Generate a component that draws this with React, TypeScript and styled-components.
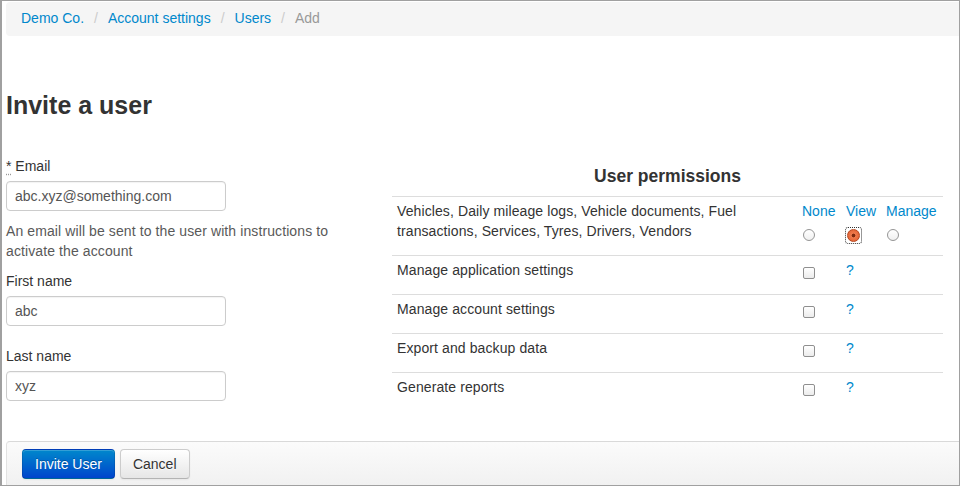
import React from "react";
import styled, { createGlobalStyle } from "styled-components";

const GlobalStyle = createGlobalStyle`
	html, body {
		margin: 0;
		padding: 0;
		background: #fff;
	}
	body {
		font-family: "Liberation Sans", Arial, Helvetica, sans-serif;
		font-size: 14px;
		line-height: 20px;
		color: #333;
	}
	* {
		box-sizing: border-box;
	}
`;

const Frame = styled.div`
	width: 960px;
	height: 486px;
	border: 1px solid #a0a0a0;
	border-left-width: 2px;
	padding-left: 4px;
	display: flex;
	flex-direction: column;
	overflow: hidden;
`;

const Breadcrumb = styled.ul`
	list-style: none;
	margin: 1px 0 0;
	padding: 6px 15px 8px;
	height: 34px;
	background: #f5f5f5;
	border-radius: 4px 0 0 4px;
	display: flex;
`;

const Crumb = styled.li<{ $active?: boolean }>`
	color: ${(p) => (p.$active ? "#999" : "#0088cc")};
`;

const Divider = styled.span`
	color: #ccc;
	padding: 0 10px;
`;

const Title = styled.h3`
	margin: 49px 0 31px 0;
	font-size: 25px;
	line-height: 40px;
	font-weight: bold;
	color: #333;
`;

const Columns = styled.div`
	display: grid;
	grid-template-columns: 386px 551px;
`;

const Field = styled.div<{ $gap: number }>`
	margin-bottom: ${(p) => p.$gap}px;
`;

const Label = styled.label`
	display: block;
	margin-bottom: 5px;
	color: #333;
`;

const Required = styled.abbr`
	text-decoration: underline dotted #999;
	text-underline-offset: 3px;
`;

const TextInput = styled.input`
	display: block;
	width: 220px;
	height: 30px;
	padding: 4px 8px;
	border: 1px solid #ccc;
	border-radius: 4px;
	font-family: inherit;
	font-size: 14px;
	color: #555;
	box-shadow: inset 0 1px 1px rgba(0, 0, 0, 0.05);
	outline: none;
`;

const Help = styled.p`
	margin: 10px 0 0;
	width: 340px;
	color: #595959;
	letter-spacing: 0.1px;
`;

const Permissions = styled.section`
	padding-top: 10px;
`;

const PermTitle = styled.h4`
	margin: 0 0 10px;
	font-size: 17.5px;
	line-height: 20px;
	font-weight: bold;
	text-align: center;
	color: #333;
`;

const PermRow = styled.div<{ $tall?: boolean }>`
	display: grid;
	grid-template-columns: 405px 44px 40px 62px;
	border-top: 1px solid #ddd;
	min-height: ${(p) => (p.$tall ? 59 : 39)}px;
`;

const Cell = styled.div`
	padding: 4px 5px 0;
	letter-spacing: 0.1px;
`;

const OptionHead = styled.span`
	display: block;
	color: #0088cc;
	letter-spacing: 0;
`;

const Radio = styled.input.attrs({ type: "radio" })`
	appearance: none;
	display: block;
	width: 12px;
	height: 12px;
	margin: 8px 0 0 1px;
	border: 1px solid #959595;
	border-radius: 50%;
	background: linear-gradient(#fff, #f0f0f0);
	&:checked {
		margin: 0;
		width: 13px;
		height: 13px;
		border-color: #b5471f;
		background: radial-gradient(circle, #7c2a0f 0 1.6px, #ee7a4c 2.2px, #e05a2b 100%);
	}
`;

const FocusRing = styled.span`
	display: flex;
	width: fit-content;
	margin: 6px 0 0 -1px;
	padding: 1px;
	border: 1px dotted #333;
	border-radius: 3px;
`;

const Check = styled.input.attrs({ type: "checkbox" })`
	appearance: none;
	display: block;
	width: 12px;
	height: 12px;
	margin: 7px 0 0 1px;
	border: 1px solid #8f8f8f;
	border-radius: 2px;
	background: linear-gradient(#fff, #ececec);
`;

const HelpLink = styled.a`
	color: #0088cc;
	text-decoration: none;
`;

const Footer = styled.div`
	margin-top: auto;
	height: 44px;
	padding: 7px 15px;
	display: flex;
	gap: 5px;
	align-items: flex-start;
	border-top: 1px solid #d9d9d9;
	border-left: 1px solid #e2e2e2;
	border-radius: 4px 0 0 0;
	background: linear-gradient(#fbfbfb, #f1f1f1);
`;

const Button = styled.button<{ $primary?: boolean }>`
	height: 30px;
	padding: 0 12px;
	font-family: inherit;
	font-size: 14px;
	border-radius: 4px;
	border: 1px solid;
	cursor: pointer;
	color: ${(p) => (p.$primary ? "#fff" : "#333")};
	background: ${(p) =>
		p.$primary ? "linear-gradient(#0088cc, #0044cc)" : "linear-gradient(#ffffff, #e6e6e6)"};
	border-color: ${(p) =>
		p.$primary
			? "rgba(0,0,0,0.1) rgba(0,0,0,0.1) rgba(0,0,0,0.25)"
			: "#ccc #ccc #b3b3b3"};
	text-shadow: ${(p) =>
		p.$primary ? "0 -1px 0 rgba(0,0,0,0.25)" : "0 1px 1px rgba(255,255,255,0.75)"};
	box-shadow: inset 0 1px 0 rgba(255, 255, 255, 0.2), 0 1px 2px rgba(0, 0, 0, 0.05);
`;

const toggles = [
	"Manage application settings",
	"Manage account settings",
	"Export and backup data",
	"Generate reports",
];

export default function App() {
	return (
		<>
			<GlobalStyle />
			<Frame>
				<Breadcrumb>
					<Crumb>Demo Co.</Crumb>
					<Divider>/</Divider>
					<Crumb>Account settings</Crumb>
					<Divider>/</Divider>
					<Crumb>Users</Crumb>
					<Divider>/</Divider>
					<Crumb $active>Add</Crumb>
				</Breadcrumb>

				<Title>Invite a user</Title>

				<Columns>
					<div>
						<Field $gap={10}>
							<Label>
								<Required title="required">*</Required> Email
							</Label>
							<TextInput defaultValue="abc.xyz@something.com" />
							<Help>An email will be sent to the user with instructions to activate the account</Help>
						</Field>
						<Field $gap={20}>
							<Label>First name</Label>
							<TextInput defaultValue="abc" />
						</Field>
						<Field $gap={0}>
							<Label>Last name</Label>
							<TextInput defaultValue="xyz" />
						</Field>
					</div>

					<Permissions>
						<PermTitle>User permissions</PermTitle>
						<PermRow $tall>
							<Cell>
								Vehicles, Daily mileage logs, Vehicle documents, Fuel transactions, Services, Tyres,
								Drivers, Vendors
							</Cell>
							<Cell>
								<OptionHead>None</OptionHead>
								<Radio name="fleet" />
							</Cell>
							<Cell>
								<OptionHead>View</OptionHead>
								<FocusRing>
									<Radio name="fleet" defaultChecked />
								</FocusRing>
							</Cell>
							<Cell>
								<OptionHead>Manage</OptionHead>
								<Radio name="fleet" />
							</Cell>
						</PermRow>
						{toggles.map((t) => (
							<PermRow key={t}>
								<Cell>{t}</Cell>
								<Cell>
									<Check />
								</Cell>
								<Cell>
									<HelpLink>?</HelpLink>
								</Cell>
								<Cell />
							</PermRow>
						))}
					</Permissions>
				</Columns>

				<Footer>
					<Button $primary>Invite User</Button>
					<Button>Cancel</Button>
				</Footer>
			</Frame>
		</>
	);
}
